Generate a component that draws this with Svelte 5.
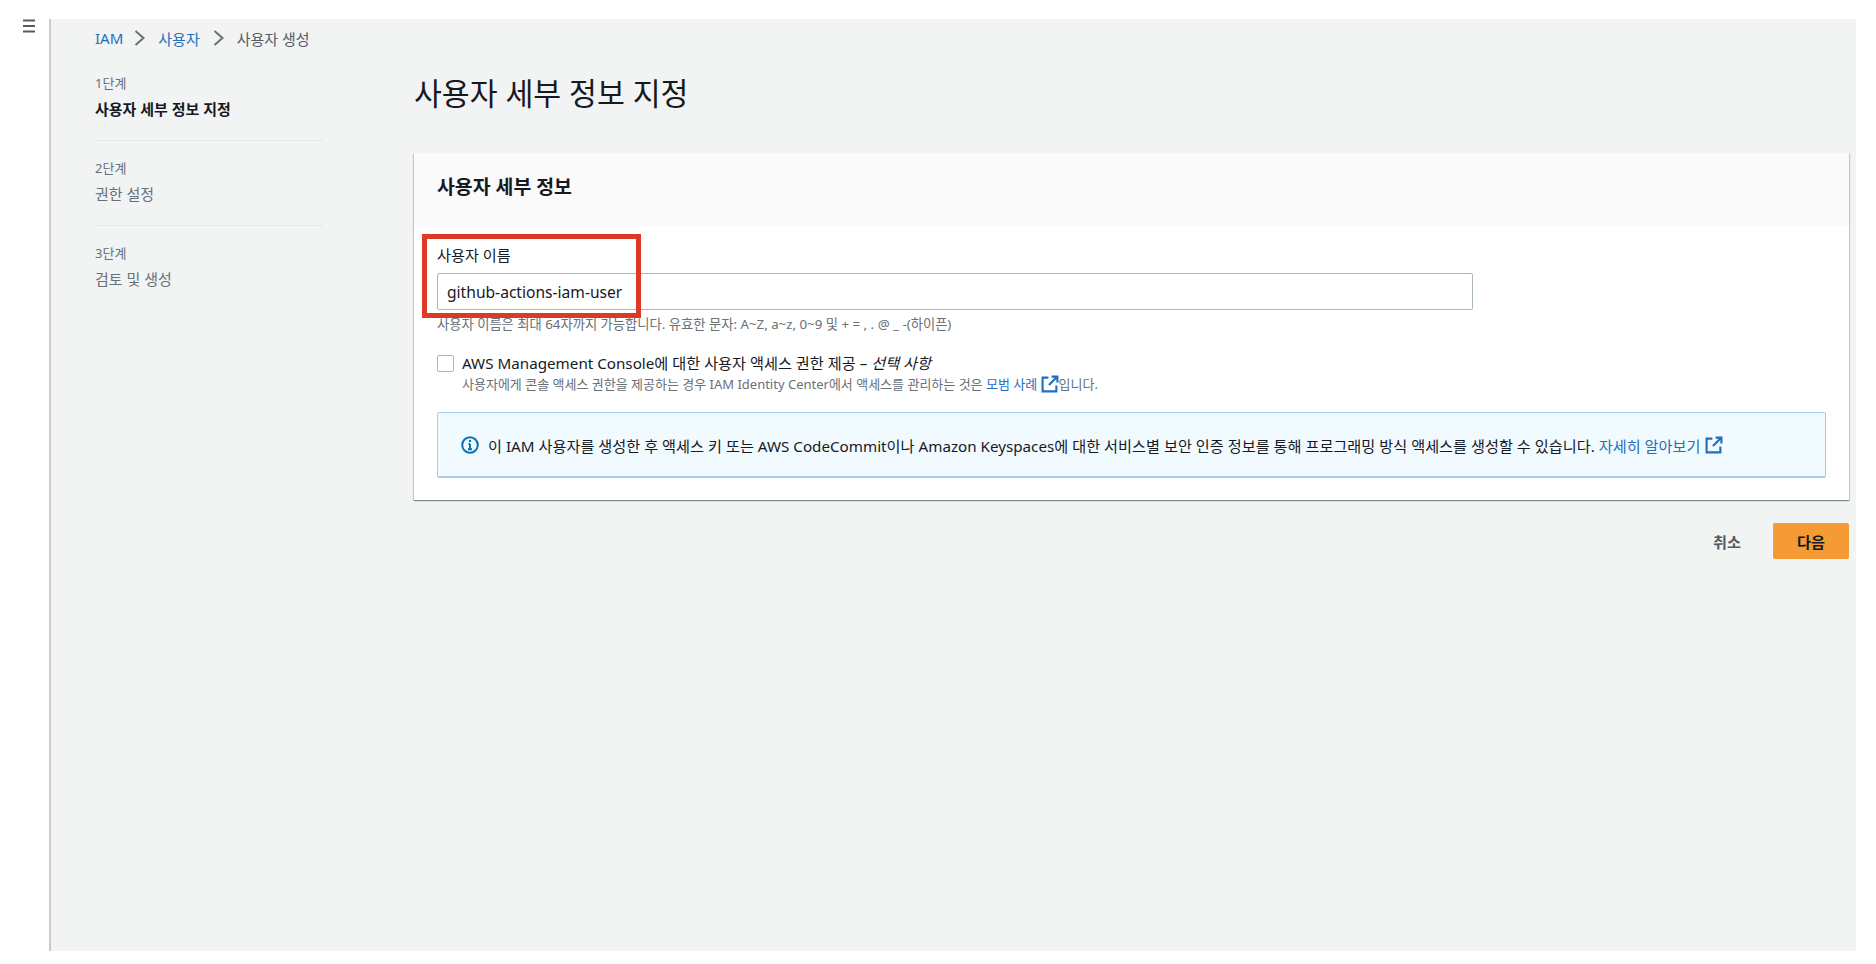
<script>
  const steps = [
    { step: "1단계", title: "사용자 세부 정보 지정", active: true },
    { step: "2단계", title: "권한 설정" },
    { step: "3단계", title: "검토 및 생성" },
  ];
</script>

<div class="page">
  <nav class="rail">
    <button class="menu" aria-label="메뉴">
      <svg width="12" height="14" viewBox="0 0 12 14"><path d="M0 1.500h12M0 7h12M0 12.500h12" stroke="#545b64" stroke-width="2" fill="none" /></svg>
    </button>
  </nav>

  <main class="content">
    <div class="crumbs">
      <a class="root" href="#iam">IAM</a>
      <svg class="chev" width="11" height="16" viewBox="0 0 11 16"><path d="M1.500 1l8 7-8 7" stroke="#687078" stroke-width="2" fill="none" /></svg>
      <a href="#users">사용자</a>
      <svg class="chev" width="11" height="16" viewBox="0 0 11 16"><path d="M1.500 1l8 7-8 7" stroke="#687078" stroke-width="2" fill="none" /></svg>
      <span>사용자 생성</span>
    </div>

    <div class="wizard">
      <ol class="steps">
        {#each steps as s}
          <li class:active={s.active}>
            <small>{s.step}</small>
            <div class="step-title">{s.title}</div>
          </li>
        {/each}
      </ol>

      <div class="form">
        <h1>사용자 세부 정보 지정</h1>

        <section class="card">
          <header><h2>사용자 세부 정보</h2></header>
          <div class="body">
            <div class="field">
              <label for="username">사용자 이름</label>
              <input id="username" value="github-actions-iam-user" />
              <p class="hint">사용자 이름은 최대 64자까지 가능합니다. 유효한 문자: A~Z, a~z, 0~9 및 + = , . @ _ -(하이픈)</p>
              <div class="redbox"></div>
            </div>

            <div class="check">
              <span class="box"></span>
              <div>
                <div class="check-label">AWS Management Console에 대한 사용자 액세스 권한 제공 – <em>선택 사항</em></div>
                <div class="check-desc">
                  사용자에게 콘솔 액세스 권한을 제공하는 경우 IAM Identity Center에서 액세스를 관리하는 것은 <a href="#bp">모범 사례</a>
                  <svg class="ext" width="18" height="18" viewBox="0 0 17 17"><path d="M7 2.500H1.500v13h13V10M10 1.500h5.500V7M15 2L7.500 9.500" stroke="#1f6fbd" stroke-width="2" fill="none" /></svg>입니다.
                </div>
              </div>
            </div>

            <div class="info">
              <svg class="info-icon" width="18" height="18" viewBox="0 0 18 18">
                <circle cx="9" cy="9" r="7.800" stroke="#0073bb" stroke-width="2" fill="none" />
                <path d="M9 8v5M7 13.200h4M7.500 8H9" stroke="#0073bb" stroke-width="2" fill="none" />
                <circle cx="9" cy="5" r="1.200" fill="#0073bb" />
              </svg>
              <span>이 IAM 사용자를 생성한 후 액세스 키 또는 AWS CodeCommit이나 Amazon Keyspaces에 대한 서비스별 보안 인증 정보를 통해 프로그래밍 방식 액세스를 생성할 수 있습니다. <a href="#more">자세히 알아보기</a></span>
              <svg class="ext" width="18" height="18" viewBox="0 0 17 17"><path d="M7 2.500H1.500v13h13V10M10 1.500h5.500V7M15 2L7.500 9.500" stroke="#1f6fbd" stroke-width="2" fill="none" /></svg>
            </div>
          </div>
        </section>

        <div class="actions">
          <button class="cancel">취소</button>
          <button class="next">다음</button>
        </div>
      </div>
    </div>
  </main>
</div>

<style>
  :global(body) {
    background: #fff;
  }

  .page {
    display: flex;
    width: 1876px;
    height: 964px;
    padding: 19px 20px 13px 0;
    box-sizing: border-box;
    font-family: "Noto Sans", "Noto Sans CJK KR", sans-serif;
    font-size: 15.2px;
    color: #16191f;
    overflow: hidden;
  }

  .rail {
    width: 49px;
    flex: none;
  }

  .menu {
    display: block;
    margin: 0 0 0 23px;
    padding: 0;
    border: 0;
    background: none;
    line-height: 0;
  }

  .content {
    flex: 1;
    background: #f2f3f3;
    border-left: 2px solid #c9cbcb;
    padding: 0 7px 0 44px;
    box-sizing: border-box;
  }

  a {
    color: #1f6fbd;
    text-decoration: none;
  }

  .crumbs {
    display: flex;
    align-items: center;
    height: 38px;
    gap: 13px;
    font-size: 15px;
    color: #545b64;
  }

  .crumbs .root {
    margin-right: -2px;
  }

  .steps {
    list-style: none;
    margin: 0;
    padding: 0;
    width: 228px;
    flex: none;
  }

  .steps li {
    height: 85px;
    box-sizing: border-box;
    padding-top: 17px;
    border-bottom: 1px solid #e6e8e8;
    color: #687078;
  }

  .steps li:last-child {
    border-bottom: 0;
  }

  .steps small {
    display: block;
    font-size: 13px;
    line-height: 20px;
    color: #687078;
  }

  .step-title {
    font-size: 15px;
    line-height: 20px;
    margin-top: 6px;
  }

  .active .step-title {
    font-weight: 700;
    color: #16191f;
  }

  .wizard {
    display: flex;
    gap: 91px;
    margin-top: -1px;
  }

  h1 {
    margin: 0;
    font-size: 30.3px;
    font-weight: 400;
    line-height: 40px;
    padding: 18px 0 39px;
  }

  .form {
    flex: 1;
    min-width: 0;
  }

  .card {
    background: #fff;
    box-shadow: 0 1px 1px 0 rgba(0, 28, 36, 0.3), 1px 1px 1px 0 rgba(0, 28, 36, 0.15), -1px 1px 1px 0 rgba(0, 28, 36, 0.15);
  }

  .card header {
    height: 73px;
    background: #fafafa;
    padding: 0 23px;
    display: flex;
    align-items: center;
    box-sizing: border-box;
  }

  h2 {
    margin: 0 0 8px;
    font-size: 19.4px;
    font-weight: 700;
  }

  .body {
    padding: 19px 23px 22px;
  }

  .field {
    position: relative;
  }

  label {
    display: block;
    line-height: 20px;
    margin-bottom: 8px;
  }

  input {
    display: block;
    width: 1036px;
    height: 37px;
    box-sizing: border-box;
    padding: 0 9px;
    border: 1px solid #aab7b8;
    border-radius: 2px;
    font: inherit;
    font-size: 15.6px;
    color: #16191f;
    background: #fff;
  }

  .hint {
    margin: 6px 0 0;
    font-size: 13.3px;
    line-height: 16px;
    color: #687078;
  }

  /* annotation drawn on top of the form */
  .redbox {
    position: absolute;
    left: -15px;
    top: -11px;
    width: 219px;
    height: 84px;
    box-sizing: border-box;
    border: 5px solid #dc3a25;
  }

  .check {
    display: flex;
    gap: 8px;
    margin-top: 21px;
  }

  .box {
    width: 15px;
    height: 15px;
    margin-top: 2px;
    flex: none;
    border: 1px solid #aab7b8;
    border-radius: 2px;
    background: #fff;
  }

  .check-label {
    line-height: 20px;
  }

  .check-desc {
    font-size: 13px;
    line-height: 23px;
    color: #687078;
  }

  .check-desc .ext {
    vertical-align: -4px;
  }

  .info {
    display: flex;
    align-items: center;
    height: 66px;
    margin-top: 16px;
    padding: 0 23px;
    box-sizing: border-box;
    border: 1px solid #a9cce8;
    border-bottom-width: 2px;
    border-radius: 2px;
    background: #f1faff;
  }

  .info-icon {
    flex: none;
    margin-right: 9px;
  }

  .info .ext {
    margin-left: 5px;
    flex: none;
  }

  .actions {
    display: flex;
    justify-content: flex-end;
    align-items: center;
    gap: 32px;
    margin-top: 23px;
  }

  .cancel {
    border: 0;
    background: none;
    padding: 0;
    font: inherit;
    font-weight: 700;
    color: #545b64;
  }

  .next {
    width: 76px;
    height: 36px;
    border: 0;
    border-radius: 2px;
    background: #f59b35;
    font: inherit;
    font-weight: 700;
    color: #16191f;
  }
</style>
